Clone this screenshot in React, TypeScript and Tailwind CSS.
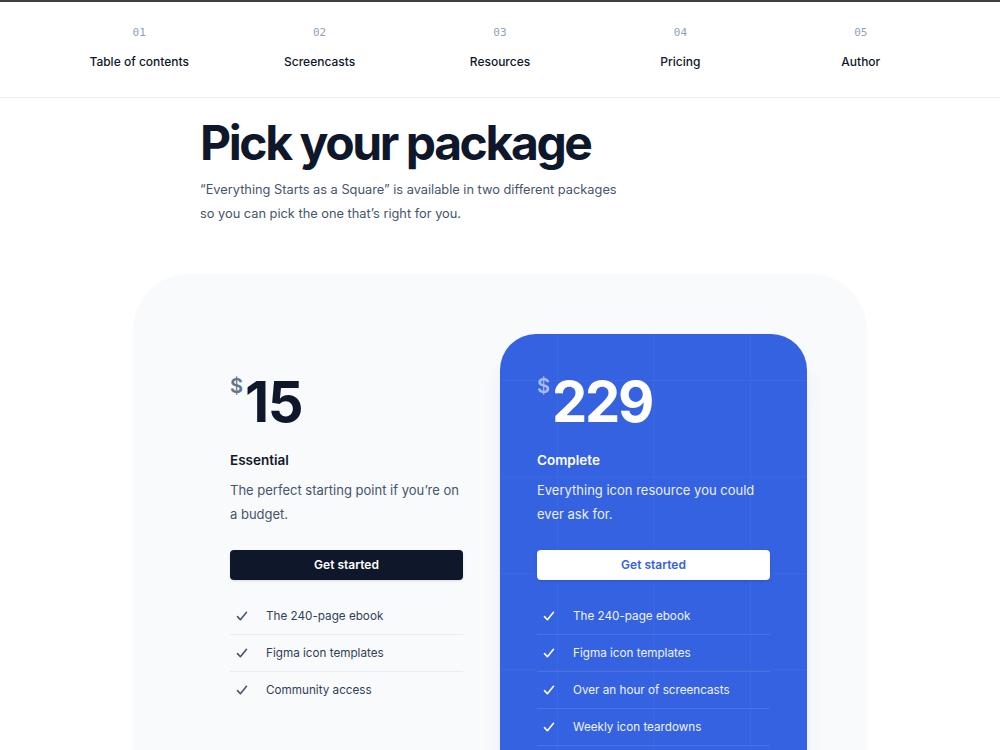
import React from "react";

const navItems = [
  { num: "01", label: "Table of contents" },
  { num: "02", label: "Screencasts" },
  { num: "03", label: "Resources" },
  { num: "04", label: "Pricing" },
  { num: "05", label: "Author" },
];

type Plan = {
  name: string;
  price: string;
  description: string;
  features: string[];
  featured?: boolean;
};

const plans: Plan[] = [
  {
    name: "Essential",
    price: "15",
    description: "The perfect starting point if you’re on a budget.",
    features: ["The 240-page ebook", "Figma icon templates", "Community access"],
  },
  {
    name: "Complete",
    price: "229",
    description: "Everything icon resource you could ever ask for.",
    features: [
      "The 240-page ebook",
      "Figma icon templates",
      "Over an hour of screencasts",
      "Weekly icon teardowns",
    ],
    featured: true,
  },
];

const CheckIcon = ({ className }: { className: string }) => (
  <svg viewBox="0 0 16 16" fill="none" className={className}>
    <path
      d="M3.5 8.6l2.9 3.1L12.5 4.3"
      stroke="currentColor"
      strokeWidth="1.6"
      strokeLinecap="round"
      strokeLinejoin="round"
    />
  </svg>
);

// faint grid drawn behind the featured card
const GridLines = () => (
  <svg className="pointer-events-none absolute inset-0 h-full w-full" aria-hidden="true">
    <defs>
      <pattern
        id="plan-grid"
        width="96.5"
        height="96.5"
        patternUnits="userSpaceOnUse"
        x="57"
        y="46"
      >
        <path d="M0 0H96.5M0 0V96.5" stroke="white" strokeOpacity="0.07" strokeWidth="1" fill="none" />
      </pattern>
    </defs>
    <rect width="100%" height="100%" fill="url(#plan-grid)" />
  </svg>
);

const PlanColumn = ({ plan }: { plan: Plan }) => {
  const f = plan.featured;
  return (
    <div
      className={
        f
          ? "relative overflow-hidden rounded-t-[36px] bg-[#3562e0] px-[37px] pt-10 pb-10 shadow-xl shadow-blue-900/10"
          : "relative px-[37px] pt-10 pb-10"
      }
    >
      {f && <GridLines />}
      <div className="relative">
        <div className="flex items-start">
          <span
            className={
              f
                ? "mt-[2px] text-[20px] leading-none font-semibold text-[#a9bdf3]"
                : "mt-[2px] text-[20px] leading-none font-semibold text-slate-500"
            }
          >
            $
          </span>
          <span
            className={
              f
                ? "ml-[2px] text-[56px] leading-none font-bold tracking-[-0.04em] text-white"
                : "ml-[2px] text-[56px] leading-none font-bold tracking-tight text-slate-900"
            }
          >
            {plan.price}
          </span>
        </div>
        <h3
          className={
            f
              ? "mt-5 text-[13.5px] leading-5 font-semibold text-white"
              : "mt-5 text-[13.5px] leading-5 font-semibold text-slate-900"
          }
        >
          {plan.name}
        </h3>
        <p
          className={
            f
              ? "mt-2 text-[13px] leading-6 text-[#eaf0fd]"
              : "mt-2 text-[13px] leading-6 text-slate-600"
          }
        >
          {plan.description}
        </p>
        <button
          className={
            f
              ? "mt-6 h-[30px] w-full rounded bg-white text-[12px] font-semibold text-[#3562e0] shadow-sm"
              : "mt-6 h-[30px] w-full rounded bg-slate-900 text-[12px] font-semibold text-white shadow-sm"
          }
        >
          Get started
        </button>
        <ul
          className={
            f
              ? "mt-[18px] divide-y divide-white/10 border-b border-white/10"
              : "mt-[18px] divide-y divide-slate-200/70"
          }
        >
          {plan.features.map((feature) => (
            <li key={feature} className="flex items-center py-2 text-[11.7px] leading-5">
              <CheckIcon className={f ? "ml-[4px] h-4 w-4 text-white" : "ml-[4px] h-4 w-4 text-slate-600"} />
              <span className={f ? "ml-4 text-[#eef2fd]" : "ml-4 text-slate-700"}>{feature}</span>
            </li>
          ))}
        </ul>
      </div>
    </div>
  );
};

export default function App() {
  return (
    <div className="min-h-screen bg-white font-['Inter',sans-serif] text-slate-900">
      <div className="h-[2px] bg-[#3f4046]" />
      <header className="border-b border-slate-200/80 bg-white pt-[23px] pb-[25px]">
        <nav className="mx-auto grid max-w-[902px] grid-cols-5 text-center">
          {navItems.map((item) => (
            <a key={item.num} href="#" className="flex flex-col items-center">
              <span className="font-['DejaVu_Sans_Mono',monospace] text-[11px] leading-4 text-slate-400">
                {item.num}
              </span>
              <span className="mt-[11px] text-[12px] leading-5 font-medium text-slate-900">
                {item.label}
              </span>
            </a>
          ))}
        </nav>
      </header>

      <main>
        <div className="mx-auto w-[600px] pt-[21px]">
          <h2 className="text-[48px] leading-none font-bold tracking-[-0.05em] text-slate-900">
            Pick your package
          </h2>
          <p className="mt-[11px] w-[430px] text-[12.8px] leading-6 text-slate-600">
            “Everything Starts as a Square” is available in two different packages so you can pick the one
            that’s right for you.
          </p>
        </div>

        <section className="mx-auto mt-12 w-[734px] rounded-t-[56px] bg-slate-50 px-[60px] pt-[60px]">
          <div className="grid grid-cols-2">
            {plans.map((plan) => (
              <PlanColumn key={plan.name} plan={plan} />
            ))}
          </div>
        </section>
      </main>
    </div>
  );
}
